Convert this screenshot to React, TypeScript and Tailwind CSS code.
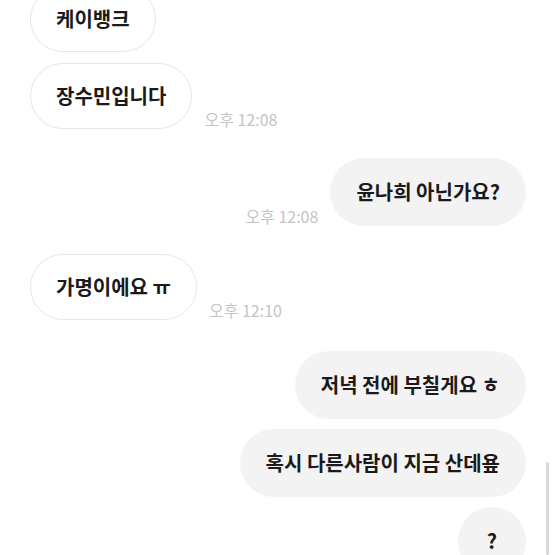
const font = { fontFamily: '"Noto Sans CJK KR", "Noto Sans", sans-serif' };

function Left({ text, time }: { text: string; time?: string }) {
    return (
        <div className="flex items-end pl-[30px]">
            <div className="h-[66px] flex items-center px-[25px] rounded-full border border-[#e6e6e6] bg-white text-[20px] font-bold text-[#1a1a1a] whitespace-nowrap">
                {text}
            </div>
            {time && (
                <span className="ml-[12px] text-[16px] leading-[20px] text-[#c4c4c4]">{time}</span>
            )}
        </div>
    );
}

function Right({ text, time }: { text: string; time?: string }) {
    return (
        <div className="flex items-end justify-end pr-[29px]">
            {time && (
                <span className="mr-[12px] text-[16px] leading-[20px] text-[#c4c4c4]">{time}</span>
            )}
            <div className="h-[68px] min-w-[68px] flex items-center justify-center px-[26px] rounded-full bg-[#f3f3f3] text-[20px] font-bold text-[#1a1a1a] whitespace-nowrap">
                {text}
            </div>
        </div>
    );
}

export default function App() {
    return (
        <div className="relative w-[555px] h-[555px] overflow-hidden bg-white" style={font}>
            <div className="flex flex-col -mt-[14px]">
                <Left text="케이뱅크" />
                <div className="mt-[11px]">
                    <Left text="장수민입니다" time="오후 12:08" />
                </div>
                <div className="mt-[29px]">
                    <Right text="윤나희 아닌가요?" time="오후 12:08" />
                </div>
                <div className="mt-[28px]">
                    <Left text="가명이에요 ㅠ" time="오후 12:10" />
                </div>
                <div className="mt-[31px]">
                    <Right text="저녁 전에 부칠게요 ㅎ" />
                </div>
                <div className="mt-[10px]">
                    <Right text="혹시 다른사람이 지금 산데욮" />
                </div>
                <div className="mt-[10px]">
                    <Right text="?" />
                </div>
            </div>

            {/* scrollbar */}
            <div className="absolute right-[6px] top-[462px] w-[3px] h-[93px] rounded-full bg-[#d9d9d9]" />
        </div>
    );
}
